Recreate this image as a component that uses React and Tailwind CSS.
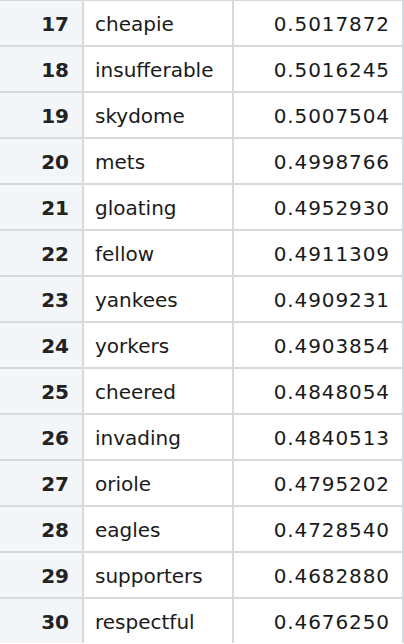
const rows = [
  [17, 'cheapie', '0.5017872'],
  [18, 'insufferable', '0.5016245'],
  [19, 'skydome', '0.5007504'],
  [20, 'mets', '0.4998766'],
  [21, 'gloating', '0.4952930'],
  [22, 'fellow', '0.4911309'],
  [23, 'yankees', '0.4909231'],
  [24, 'yorkers', '0.4903854'],
  [25, 'cheered', '0.4848054'],
  [26, 'invading', '0.4840513'],
  [27, 'oriole', '0.4795202'],
  [28, 'eagles', '0.4728540'],
  [29, 'supporters', '0.4682880'],
  [30, 'respectful', '0.4676250'],
]

function App() {
  return (
    <div className="w-[404px] h-[644px] overflow-hidden bg-white font-['DejaVu_Sans',sans-serif] text-[20px] text-[#1a1a1a]">
      <div className="-mt-[1px]">
        {rows.map(([n, word, score]) => (
          <div key={n} className="flex h-[46px] border-t-2 border-[#d6dadd]">
            <div className="w-[84px] shrink-0 bg-[#f3f6f8] border-r-2 border-[#d6dadd] flex items-center justify-end pr-[13px] pt-[2px] font-bold text-[#222]">
              {n}
            </div>
            <div className="w-[150px] shrink-0 border-r-2 border-[#d6dadd] flex items-center pl-[11px] pt-[2px]">
              {word}
            </div>
            <div className="w-[170px] shrink-0 border-r-2 border-[#d6dadd] flex items-center justify-end pr-[12px] pt-[2px] tracking-[0.9px]">
              {score}
            </div>
          </div>
        ))}
      </div>
    </div>
  )
}

export default App
